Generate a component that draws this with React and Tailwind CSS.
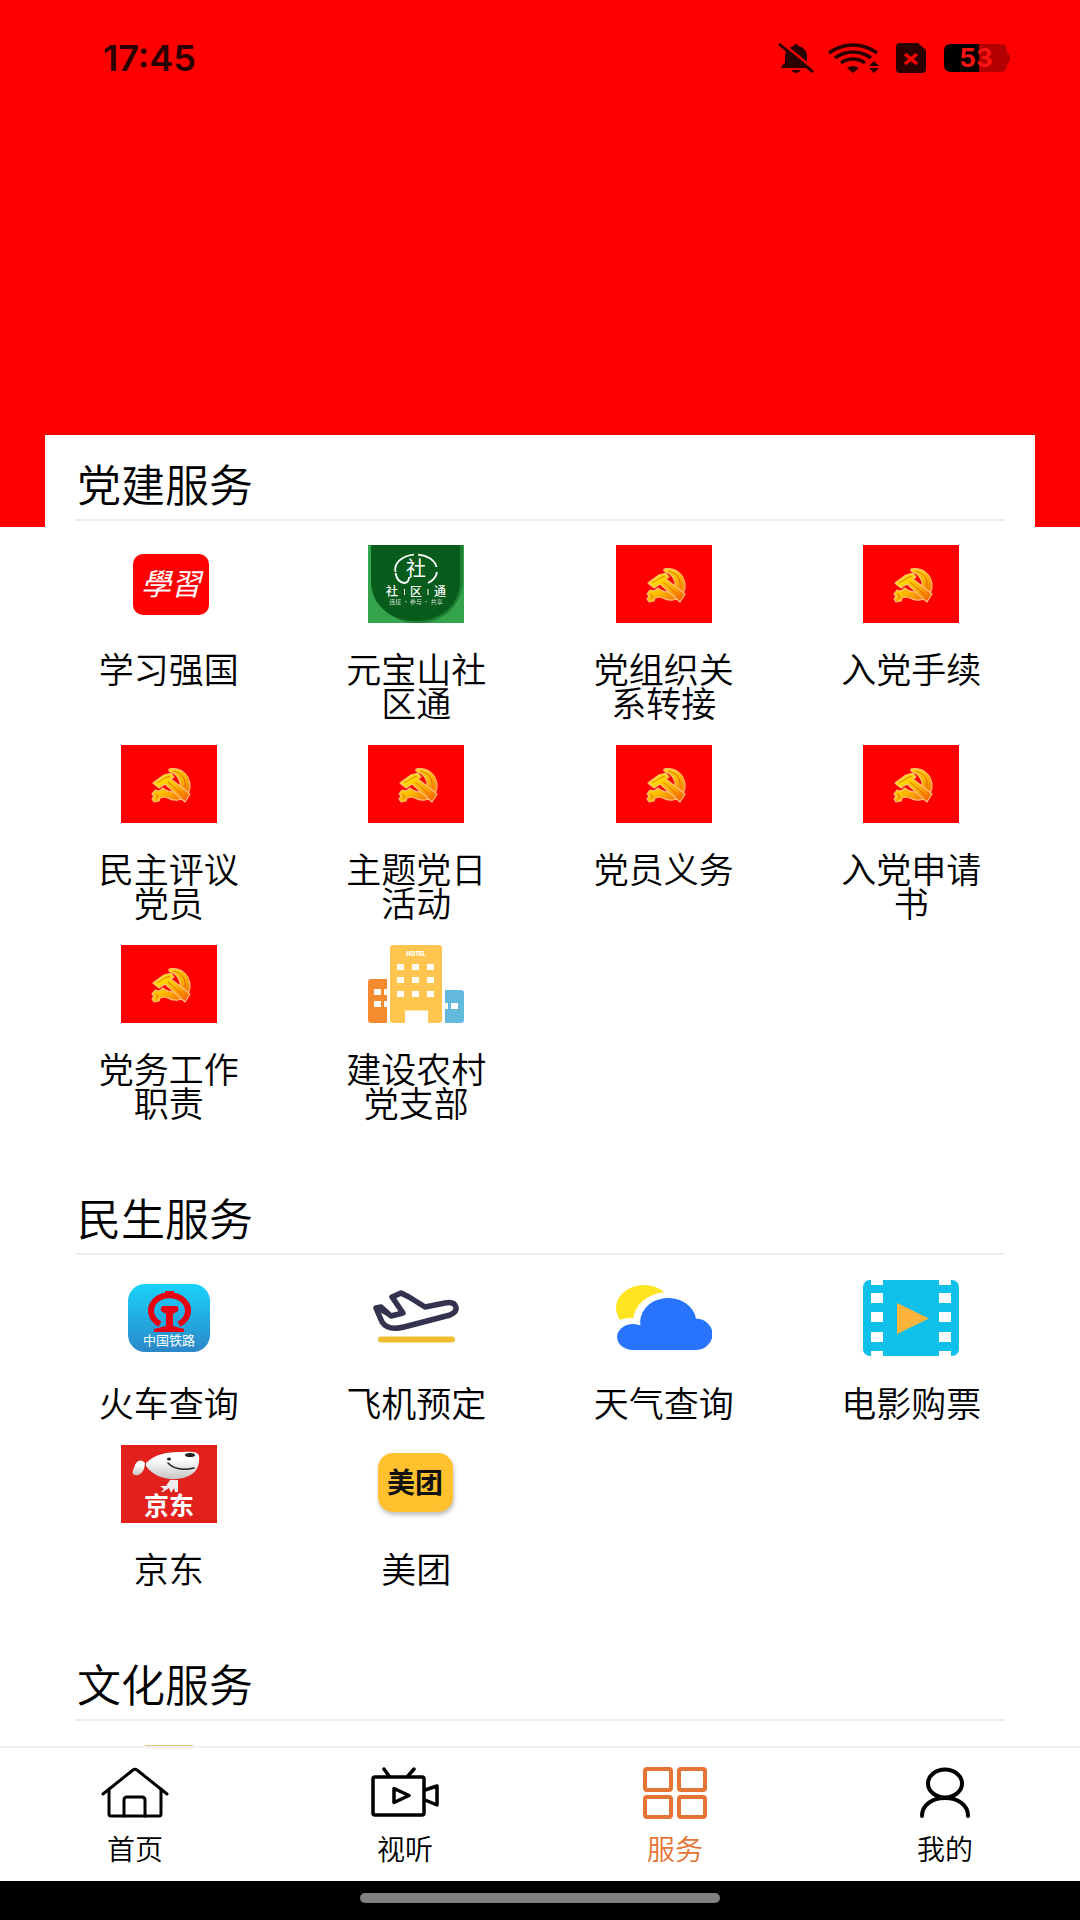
import React from "react";

const cjk = "font-['Noto_Sans_CJK_SC',sans-serif]";

function Icon({ children }) {
  return (
    <svg viewBox="0 0 96 78" className="h-[78px] w-24" aria-hidden="true">
      {children}
    </svg>
  );
}

function PartyIcon() {
  return (
    <Icon>
      <defs>
        <linearGradient id="gold" x1="0" y1="0" x2="1" y2="1">
          <stop offset="0.15" stopColor="#ffe600" />
          <stop offset="0.55" stopColor="#ffb400" />
          <stop offset="1" stopColor="#f0500a" />
        </linearGradient>
      </defs>
      <rect width="96" height="78" fill="#fe0000" />
      <g fill="url(#gold)" stroke="#ffc27a" strokeWidth="1.2" strokeLinejoin="round">
        <path d="M48 24C60 22 69 30 69 41C69 46 67 49 64 52C59 56 52 56 47 53L43 52L39 53L38 56L33 57L31 54L33 51L31 49L34 45L38 46L42 43C49 49 57 48 59 41C60 35 56 29 48 26Z" />
        <path d="M32 38L43 30L50 28L53 32L50 34L69 49L64 57L44 39L38 43Z" />
      </g>
      <g fill="none" stroke="#d65a00" strokeWidth="1" opacity="0.8">
        <path d="M52 26C61 28 65 34 64 42" />
        <path d="M36 38L44 33L49 31" />
        <path d="M47 37L61 49" />
        <path d="M34 49L37 51L35 54" />
      </g>
    </Icon>
  );
}

function StudyIcon() {
  return (
    <Icon>
      <rect x="12" y="9" width="76" height="61" rx="10" fill="#fe0000" />
      <text x="50" y="50" textAnchor="middle" fontSize="30" fontStyle="italic" fontWeight="400" fill="#fff" className="font-['Noto_Sans_CJK_TC',sans-serif]">
        學習
      </text>
    </Icon>
  );
}

function CommunityIcon() {
  return (
    <Icon>
      <rect width="96" height="78" fill="#33a44b" />
      <path d="M4 0H95V34C95 60 75 78 50 78C24 78 4 60 4 36Z" fill="#1f7d35" />
      <path d="M3 0H92V36C92 60 72 76 48 76C23 76 3 60 3 36Z" fill="#075c1c" />
      <g fill="none" stroke="#fff" strokeWidth="1.8">
        <path d="M27.5 27A21 15 0 0 1 46 9.6" />
        <path d="M50 9.6A21 15 0 0 1 68.5 22" />
        <path d="M69 27Q68 34 60 38" />
        <path d="M27.5 28Q29 37 36 38Q41 38 41 32" />
      </g>
      <g fill="#fff" textAnchor="middle" className={cjk}>
        <text x="48" y="31" fontSize="20" fontWeight="400">社</text>
        <text x="24" y="51" fontSize="12" fontWeight="500">社</text>
        <text x="48" y="51" fontSize="12" fontWeight="500">区</text>
        <text x="72" y="51" fontSize="12" fontWeight="500">通</text>
        <text x="48" y="59" fontSize="6" opacity="0.8">连接 · 参与 · 共享</text>
      </g>
      <path d="M36.5 44V50M60 44V50" stroke="#fff" strokeWidth="1" />
    </Icon>
  );
}

function HotelIcon() {
  return (
    <Icon>
      <path d="M3 34H19V78H3Q0 78 0 75V37Q0 34 3 34Z" fill="#f68a2e" />
      <path d="M77 45H93Q96 45 96 48V75Q96 78 93 78H77Z" fill="#63b9dc" />
      <rect x="22" y="0" width="52" height="78" rx="3" fill="#ffc54e" />
      <g fill="#fff">
        <path d="M37 65.5H60V78H37Z" />
        {[19, 32, 46].map((y) =>
          [29, 44, 59].map((x) => <rect key={`${x}-${y}`} x={x} y={y} width="7" height="6" />)
        )}
        <path d="M6 44H13V50H6ZM16 44H19V50H16ZM6 56H13V62H6ZM16 56H19V62H16ZM77 58H80V64H77ZM83 58H90V64H83Z" />
        <text x="48" y="11" fontSize="6" fontWeight="800" textAnchor="middle" className="font-['Open_Sans',sans-serif]">HOTEL</text>
      </g>
    </Icon>
  );
}

function TrainIcon() {
  return (
    <Icon>
      <defs>
        <linearGradient id="rail" x1="0" y1="0" x2="0" y2="1">
          <stop offset="0" stopColor="#19d3fb" />
          <stop offset="1" stopColor="#2c86c8" />
        </linearGradient>
      </defs>
      <rect x="7" y="5" width="82" height="68" rx="17" fill="url(#rail)" />
      <path d="M39 45A18.5 15.5 0 1 1 58 45" fill="none" stroke="#e60012" strokeWidth="6" />
      <path d="M44 12H53V17H44ZM42 27H56Q58 28 57 32L52 35V47L63 50V53H33V50L45 47V35L40 32Q39 28 42 27Z" fill="#e60012" />
      <text x="48" y="66" textAnchor="middle" fontSize="13" fill="#fff" className={cjk}>中国铁路</text>
    </Icon>
  );
}

function PlaneIcon() {
  return (
    <Icon>
      <path d="M8 29L13 28L23 37L35 34L24 18L33 14L41 18L57 28L77 24Q86 22 88 28Q89 33 82 36L36 48Q20 52 14 43Z" fill="none" stroke="#33334f" strokeWidth="5.5" strokeLinejoin="round" />
      <path d="M8 28L13 27L23 36L35 34L27 19L33 14L24 17L32 33L23 38L12 32Z" fill="#33334f" stroke="#33334f" strokeWidth="2" strokeLinejoin="round" />
      <path d="M13 60.5H84" stroke="#efbd31" strokeWidth="6" strokeLinecap="round" />
    </Icon>
  );
}

function WeatherIcon() {
  return (
    <Icon>
      <ellipse cx="28" cy="29" rx="28" ry="23" fill="#ffe51f" />
      <ellipse cx="52" cy="42" rx="35" ry="29" fill="#fff" />
      <ellipse cx="15" cy="57" rx="24" ry="18" fill="#fff" />
      <path d="M16 71A16 13 0 1 1 24.5 46.5A28 24 0 1 1 80 39.5A17 15.75 0 0 1 79 71Z" fill="#2874ff" />
    </Icon>
  );
}

function FilmIcon() {
  return (
    <Icon>
      <rect y="1" width="96" height="76" rx="7" fill="#0fc0ea" />
      <g fill="#fff">
        {[8, 76].map((x) => (
          <g key={x}>
            <rect x={x} y="0" width="12" height="6" />
            <rect x={x} y="14" width="12" height="10" />
            <rect x={x} y="33" width="12" height="10" />
            <rect x={x} y="53" width="12" height="10" />
            <rect x={x} y="72" width="12" height="6" />
          </g>
        ))}
      </g>
      <path d="M34 24L66 39.5L34 55Z" fill="#feb43c" />
    </Icon>
  );
}

function JdIcon() {
  return (
    <Icon>
      <defs>
        <linearGradient id="dog" x1="0" y1="0" x2="0" y2="1">
          <stop offset="0.3" stopColor="#ffffff" />
          <stop offset="1" stopColor="#c4c4c4" />
        </linearGradient>
      </defs>
      <rect width="96" height="78" fill="#e2211c" />
      <path d="M24 18C19 13 15 16 13 23C10 28 12 31 17 30C21 29 24 24 24 18Z" fill="url(#dog)" />
      <path d="M25 18C34 9 46 7 60 7C71 6 78 7 78 11C79 22 75 32 56 34C44 35 32 31 25 21Z" fill="url(#dog)" />
      <path d="M49 35H57V47H54L53 43L50 48L48 43L42 47L40 47L43 44L39 41L45 41Z" fill="#eee" />
      <ellipse cx="69" cy="10" rx="5" ry="2" fill="#222" />
      <ellipse cx="48" cy="14" rx="2" ry="1.5" fill="#222" />
      <path d="M47 18Q55 27 73 23" fill="none" stroke="#222" strokeWidth="1.5" strokeLinecap="round" />
      <text x="48" y="70" textAnchor="middle" fontSize="25" fontWeight="700" fill="#fff" className={cjk}>京东</text>
    </Icon>
  );
}

function MeituanIcon() {
  return (
    <Icon>
      <rect x="10" y="8" width="75" height="59" rx="15" fill="#ffc12d" className="drop-shadow-[1px_3px_2px_#00000040]" />
      <text x="47" y="48" textAnchor="middle" fontSize="28" fontWeight="700" fill="#111" className={cjk}>美团</text>
    </Icon>
  );
}

function CultureIcon() {
  return (
    <Icon>
      <rect x="24" y="0" width="48" height="40" fill="#e3c878" />
    </Icon>
  );
}

const sections = [
  {
    title: "党建服务",
    items: [
      ["学习强国", StudyIcon],
      ["元宝山社区通", CommunityIcon],
      ["党组织关系转接", PartyIcon],
      ["入党手续", PartyIcon],
      ["民主评议党员", PartyIcon],
      ["主题党日活动", PartyIcon],
      ["党员义务", PartyIcon],
      ["入党申请书", PartyIcon],
      ["党务工作职责", PartyIcon],
      ["建设农村党支部", HotelIcon],
    ],
  },
  {
    title: "民生服务",
    items: [
      ["火车查询", TrainIcon],
      ["飞机预定", PlaneIcon],
      ["天气查询", WeatherIcon],
      ["电影购票", FilmIcon],
      ["京东", JdIcon],
      ["美团", MeituanIcon],
    ],
  },
  { title: "文化服务", items: [["", CultureIcon]] },
];

function Section({ title, items }) {
  return (
    <section className="mb-6">
      <h2 className="mx-[30px] border-b-2 border-[#eeeeee] pt-[18px] pb-1.5 pl-0.5 text-[44px] leading-[60px] font-[350]">{title}</h2>
      <div className="grid grid-cols-4 pt-6">
        {items.map(([label, Picture]) => (
          <button key={label} type="button" className="flex flex-col items-center justify-start pb-[26px]">
            <Picture />
            <span className="mt-7 w-[150px] text-[35px] leading-[34px] font-[350]">{label}</span>
          </button>
        ))}
      </div>
    </section>
  );
}

function StatusBar() {
  return (
    <div className="flex items-center justify-between pt-9 pr-[70px] pl-[103px] text-[#2a0000]">
      <span className="font-['Inter',sans-serif] text-[36px] leading-[44px] font-semibold">17:45</span>
      <div className="flex items-center">
        <svg viewBox="0 0 36 30" className="mr-3.5 h-[30px] w-9" aria-hidden="true">
          <path d="M18 1Q20 1 20.5 3Q28 5 29 12V19L33 25H3Q3 23 7 20V12Q8 5 15.5 3Q16 1 18 1ZM13 27H23Q21 30 18 30Q15 30 13 27Z" fill="currentColor" />
          <path d="M3 -1L37 27" stroke="#fe0000" strokeWidth="2.5" />
          <path d="M1 1L35 29" stroke="currentColor" strokeWidth="2.8" />
        </svg>
        <svg viewBox="0 0 52 30" className="mr-4 h-[30px] w-[52px]" aria-hidden="true">
          <g fill="none" stroke="currentColor" strokeWidth="3.5">
            <path d="M1 10Q12 2 25 2Q38 2 49 10" />
            <path d="M7 15Q15 9 25 9Q35 9 43 15" />
            <path d="M13 20Q18 16 25 16Q32 16 37 20" />
          </g>
          <path d="M25 30L19 25Q25 21 31 25ZM46 18L51 23H41ZM46 30L41 25H51Z" fill="currentColor" />
        </svg>
        <svg viewBox="0 0 30 30" className="mr-[18px] h-[30px] w-[30px]" aria-hidden="true">
          <path d="M4 0H22L30 7V26Q30 30 26 30H4Q0 30 0 26V4Q0 0 4 0Z" fill="currentColor" />
          <path d="M9 11L21 21M21 11L9 21" stroke="#fe0000" strokeWidth="3.5" />
        </svg>
        <svg viewBox="0 0 66 30" className="h-[30px] w-[66px]" role="img" aria-label="53%">
          <path d="M35 1H57Q63 1 63 8V10Q66 10 66 15Q66 20 63 20V22Q63 29 57 29H35Z" fill="#b40000" />
          <path d="M7 1H35V29H7Q0 29 0 22V8Q0 1 7 1Z" fill="#000" />
          <text x="32" y="24" textAnchor="middle" fontSize="26" fontWeight="700" fill="#ff1414" className="font-['Inter',sans-serif]">53</text>
        </svg>
      </div>
    </div>
  );
}

function TabIcon({ children }) {
  return (
    <svg viewBox="0 0 72 54" className="h-[54px] w-[72px]" fill="none" stroke="currentColor" strokeWidth="4" strokeLinecap="round" strokeLinejoin="round" aria-hidden="true">
      {children}
    </svg>
  );
}

const tabs = [
  {
    label: "首页",
    icon: (
      <TabIcon>
        <g strokeWidth="3">
          <path d="M4 28L34 4Q36 2.5 38 4L68 28" />
          <path d="M10 23V48Q10 50 12 50H60Q62 50 62 48V23" />
          <path d="M25 50V34Q25 31 28 31H43Q46 31 46 34V50" />
        </g>
      </TabIcon>
    ),
  },
  {
    label: "视听",
    icon: (
      <TabIcon>
        <g strokeWidth="3.5">
          <rect x="4" y="11" width="51" height="38" rx="2" />
          <path d="M15 3L20 10M45 3L39 10M25 22.5V36.5L40 29.5ZM56 24L68 20V39L56 34" />
        </g>
      </TabIcon>
    ),
  },
  {
    label: "服务",
    active: true,
    icon: (
      <TabIcon>
        <rect x="6" y="3" width="26" height="21" rx="2" />
        <rect x="40" y="3" width="26" height="21" rx="2" />
        <rect x="6" y="31" width="26" height="20" rx="2" />
        <rect x="40" y="31" width="26" height="20" rx="2" />
      </TabIcon>
    ),
  },
  {
    label: "我的",
    icon: (
      <TabIcon>
        <ellipse cx="36" cy="17.5" rx="17" ry="14" />
        <path d="M13 50C13 39 23 32 36 32C49 32 59 39 59 50" />
      </TabIcon>
    ),
  },
];

export default function App() {
  return (
    <div className="flex h-screen flex-col bg-white font-['Noto_Sans_CJK_SC',sans-serif] text-black" lang="zh-CN">
      <main className="min-h-0 flex-1 overflow-y-auto [scrollbar-width:none]">
        <header className="h-[527px] bg-[#fe0000]">
          <StatusBar />
        </header>
        <div className="relative mx-[45px] -mt-[92px] bg-white">
          {sections.map((section) => (
            <Section key={section.title} {...section} />
          ))}
        </div>
      </main>
      <nav className="grid grid-cols-4 border-t-2 border-[#f0f0f0] bg-white pt-[18px] pb-4">
        {tabs.map(({ label, icon, active }) => (
          <button
            key={label}
            type="button"
            aria-current={active ? "page" : undefined}
            className={`flex flex-col items-center ${active ? "text-[#e67535]" : "text-black"}`}
          >
            {icon}
            <span className="mt-[11px] text-[28px] leading-[34px] font-[350]">{label}</span>
          </button>
        ))}
      </nav>
      <div className="flex h-[39px] items-start justify-center bg-black pt-3">
        <div className="h-2.5 w-1/3 rounded-full bg-[#808080]" />
      </div>
    </div>
  );
}
